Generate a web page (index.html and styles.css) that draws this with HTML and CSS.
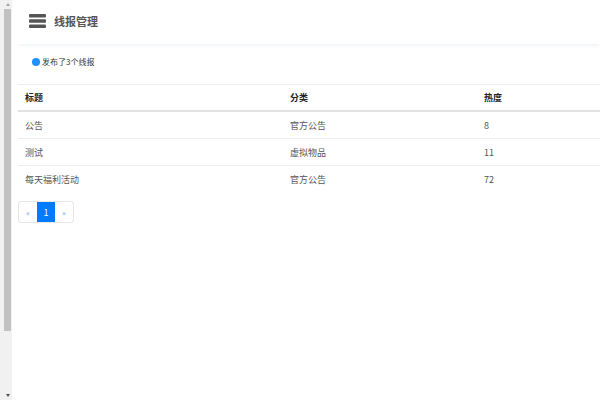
FILE: index.html
```html
<!DOCTYPE html>
<html lang="zh-CN">
<head>
  <meta charset="UTF-8">
  <meta name="viewport" content="width=device-width, initial-scale=1.0">
  <title>线报管理</title>
  <link rel="stylesheet" href="styles.css">
</head>
<body>
  <div class="page">
    <div class="scrollbar">
      <span class="arrow up"></span>
      <div class="thumb"></div>
      <span class="arrow down"></span>
    </div>

    <div class="main">
      <div class="header">
        <svg class="menu-icon" width="17" height="14" viewBox="0 0 17 14">
          <rect x="0" y="0" width="17" height="3.4" rx="1" fill="#555"/>
          <rect x="0" y="5.3" width="17" height="3.4" rx="1" fill="#555"/>
          <rect x="0" y="10.6" width="17" height="3.4" rx="1" fill="#555"/>
        </svg>
        <span class="title">线报管理</span>
      </div>

      <div class="info">
        <span class="dot"></span>
        <span>发布了3个线报</span>
      </div>

      <table class="list">
        <thead>
          <tr>
            <th class="col-title">标题</th>
            <th class="col-type">分类</th>
            <th>热度</th>
          </tr>
        </thead>
        <tbody>
          <tr>
            <td>公告</td>
            <td>官方公告</td>
            <td>8</td>
          </tr>
          <tr>
            <td>测试</td>
            <td>虚拟物品</td>
            <td>11</td>
          </tr>
          <tr>
            <td>每天福利活动</td>
            <td>官方公告</td>
            <td>72</td>
          </tr>
        </tbody>
      </table>

      <div class="pagination">
        <span class="page-item">&laquo;</span>
        <span class="page-item active">1</span>
        <span class="page-item">&raquo;</span>
      </div>
    </div>
  </div>
</body>
</html>
```

FILE: styles.css
```css
body {
  margin: 0;
  font-family: "Noto Sans CJK SC", "Noto Sans", sans-serif;
  color: #333;
  background: #fff;
}
.page {
  display: flex;
  height: 400px;
  overflow: hidden;
}
.scrollbar {
  width: 12px;
  background-color: #f1f1f1;
  display: flex;
  flex-direction: column;
  align-items: flex-end;
  flex-shrink: 0;
}
.thumb {
  width: 7px;
  height: 322px;
  margin-right: 1px;
  background-color: #c1c1c1;
}
.arrow {
  width: 0;
  height: 0;
  margin-right: 2px;
  border-left: 2.5px solid transparent;
  border-right: 2.5px solid transparent;
}
.arrow.up {
  margin-top: 3px;
  margin-bottom: 3px;
  border-bottom: 3px solid #a3a3a3;
}
.arrow.down {
  margin-top: auto;
  margin-bottom: 3px;
  border-top: 3px solid #505050;
}
.main {
  flex: 1;
  margin-left: 6px;
}
.header {
  height: 41px;
  padding-bottom: 3px;
  display: flex;
  align-items: center;
  padding-left: 11px;
  box-shadow: 0 3px 3px -1px rgba(20, 60, 120, 0.06);
}
.menu-icon {
  margin-right: 8px;
}
.title {
  font-size: 11px;
  font-weight: bold;
  color: #555;
}
.info {
  height: 35px;
  padding-bottom: 5px;
  display: flex;
  align-items: center;
  padding-left: 14px;
  font-size: 8px;
  color: #333;
  border-bottom: 1px solid #eee;
}
.dot {
  width: 8px;
  height: 8px;
  border-radius: 50%;
  background-color: #1e90ff;
  margin-right: 2px;
}
.list {
  width: 100%;
  border-collapse: collapse;
  font-size: 9px;
  color: #555;
}
.list th {
  height: 25px;
  text-align: left;
  padding: 0 7px;
  color: #222;
  font-weight: bold;
  border-bottom: 2px solid #e2e2e2;
}
.list td {
  height: 26px;
  padding: 0 7px;
  border-bottom: 1px solid #eee;
}
.list tr:last-child td {
  border-bottom: none;
}
.col-title {
  width: 251px;
}
.col-type {
  width: 180px;
}
.pagination {
  display: inline-flex;
  margin-top: 9px;
  border: 1px solid #e6e6e6;
  border-radius: 3px;
  overflow: hidden;
}
.page-item {
  width: 18px;
  height: 20px;
  display: flex;
  align-items: center;
  justify-content: center;
  font-size: 8px;
  color: #6aa6ff;
}
.page-item.active {
  background-color: #007bff;
  color: #fff;
  font-size: 9px;
}
```
